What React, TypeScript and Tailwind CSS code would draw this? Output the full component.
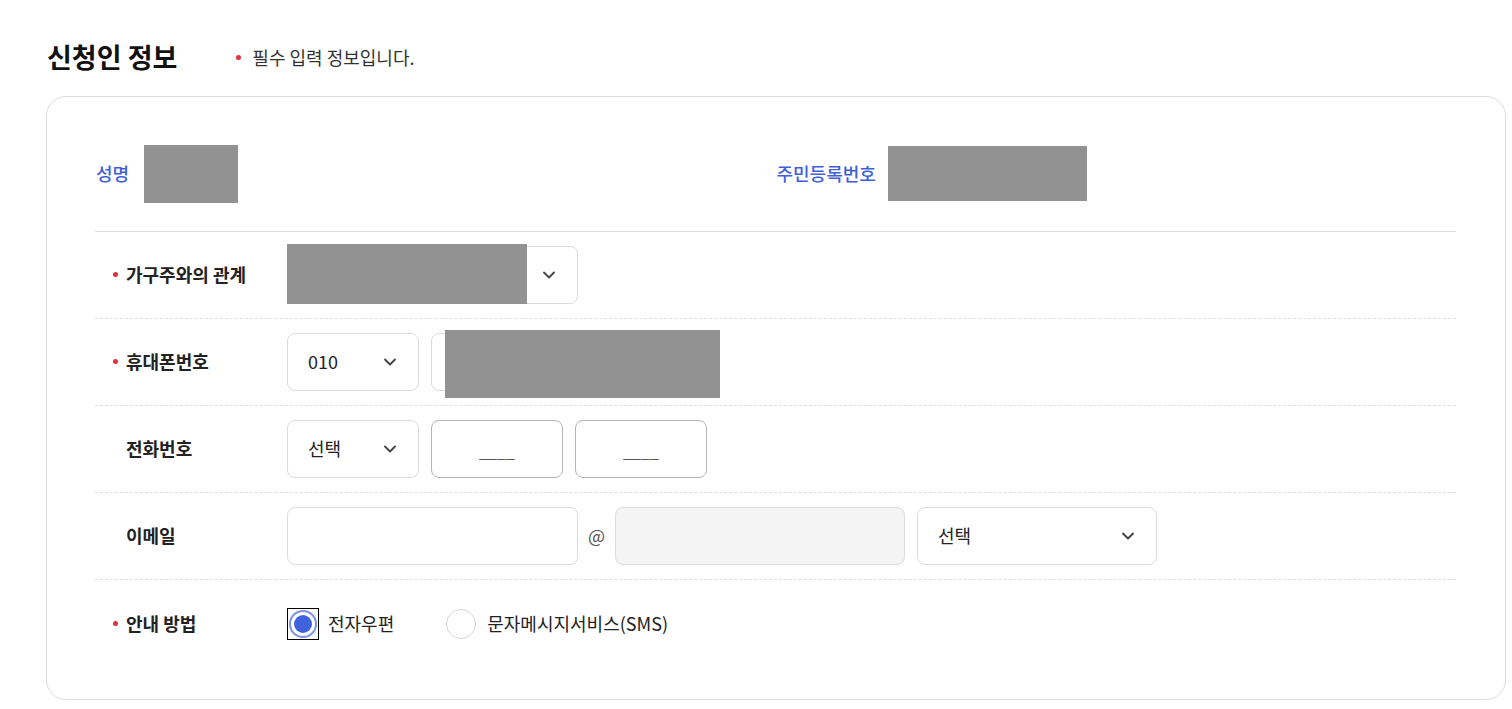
import { ChevronDown } from 'lucide-react';

const font = { fontFamily: '"Noto Sans CJK KR", "Noto Sans", sans-serif' };

function Bullet({ gap = 'mr-[8px]' }: { gap?: string }) {
  return <span className={`${gap} inline-block h-[5px] w-[5px] rounded-full bg-[#e0323c]`} />;
}

function SelectBox({ label, width }: { label?: string; width: string }) {
  return (
    <div
      className={`${width} flex h-[58px] items-center justify-between rounded-[8px] border border-[#dcdcdc] bg-white pl-[20px] pr-[18px] text-[18px] text-[#222]`}
    >
      <span>{label}</span>
      <ChevronDown size={20} strokeWidth={2.25} className="text-[#444]" />
    </div>
  );
}

function Row({ label, required, children, last }: { label: string; required?: boolean; children: React.ReactNode; last?: boolean }) {
  return (
    <div className={`flex items-center ${last ? 'pb-[28px] pt-[28px]' : 'border-b border-dashed border-[#dedede] py-[14px]'}`}>
      <div className="flex w-[192px] items-center pl-[18px] text-[18px] font-bold text-[#222]">
        {required ? <Bullet /> : <span className="mr-[8px] inline-block w-[5px]" />}
        {label}
      </div>
      <div className="flex items-center gap-[12px]">{children}</div>
    </div>
  );
}

export default function App() {
  return (
    <div className="min-h-screen bg-white pt-[37px]" style={font}>
      <div className="ml-[47px] flex items-center">
        <h2 className="text-[27px] font-bold text-[#111]">신청인 정보</h2>
        <p className="ml-[59px] flex items-center text-[18px] text-[#333]">
          <Bullet gap="mr-[11px]" />
          필수 입력 정보입니다.
        </p>
      </div>

      <div className="ml-[46px] mt-[18px] w-[1460px] rounded-[20px] border border-[#dddddd] pb-[31px] pl-[48px] pr-[49px] pt-[48px]">
        <div className="grid grid-cols-2 border-b border-[#dddddd] pb-[28px]">
          <div className="flex items-center">
            <span className="pl-[1px] text-[18px] font-medium text-[#3f5fd9]">성명</span>
            <div className="ml-[15px] h-[58px] w-[94px] bg-[#929292]" />
          </div>
          <div className="flex items-center">
            <span className="ml-[1px] text-[18px] font-medium text-[#3f5fd9]">주민등록번호</span>
            <div className="ml-[12px] h-[55px] w-[199px] bg-[#929292]" />
          </div>
        </div>

        <Row label="가구주와의 관계" required>
          <div className="relative">
            <SelectBox width="w-[291px]" />
            <div className="absolute left-0 top-[-2px] h-[60px] w-[240px] bg-[#929292]" />
          </div>
        </Row>

        <Row label="휴대폰번호" required>
          <SelectBox label="010" width="w-[132px]" />
          <div className="relative">
            <div className="h-[58px] w-[132px] rounded-[8px] border border-[#dcdcdc]" />
            <div className="absolute left-[14px] top-[-3px] h-[68px] w-[275px] bg-[#929292]" />
          </div>
        </Row>

        <Row label="전화번호">
          <SelectBox label="선택" width="w-[132px]" />
          <div className="flex h-[58px] w-[132px] items-end justify-center rounded-[8px] border border-[#b5b5b5] pb-[14px] text-[16px] text-[#555]">
            ____
          </div>
          <div className="flex h-[58px] w-[132px] items-end justify-center rounded-[8px] border border-[#b5b5b5] pb-[14px] text-[16px] text-[#555]">
            ____
          </div>
        </Row>

        <Row label="이메일">
          <div className="h-[58px] w-[291px] rounded-[8px] border border-[#dcdcdc] bg-white" />
          <span className="mx-[-2px] text-[18px] text-[#555]">@</span>
          <div className="h-[58px] w-[290px] rounded-[8px] border border-[#dcdcdc] bg-[#f4f4f4]" />
          <SelectBox label="선택" width="w-[240px]" />
        </Row>

        <Row label="안내 방법" required last>
          <div className="flex items-center">
            <span className="flex h-[32px] w-[32px] items-center justify-center border border-black">
              <span className="flex h-[28px] w-[28px] items-center justify-center rounded-full border-2 border-[#7d93e6]">
                <span className="h-[18px] w-[18px] rounded-full bg-[#3f63dd]" />
              </span>
            </span>
            <span className="ml-[9px] text-[18px] text-[#222]">전자우편</span>
          </div>
          <div className="ml-[40px] flex items-center">
            <span className="h-[30px] w-[30px] rounded-full border border-[#d4d4d4]" />
            <span className="ml-[11px] text-[18px] text-[#222]">문자메시지서비스(SMS)</span>
          </div>
        </Row>
      </div>
    </div>
  );
}
